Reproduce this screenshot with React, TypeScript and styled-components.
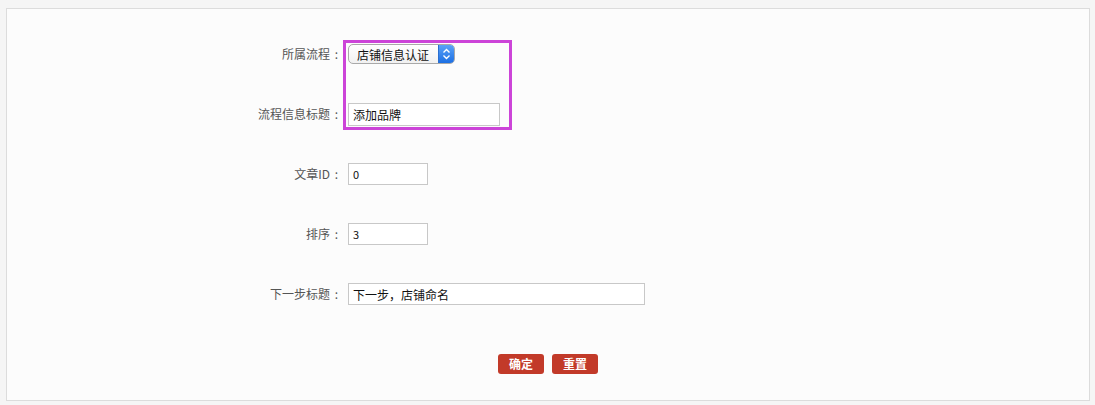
import React from "react";
import styled, { createGlobalStyle } from "styled-components";

const GlobalStyle = createGlobalStyle`
  html, body {
    margin: 0;
    padding: 0;
    background: #f5f5f5;
    font-family: "Noto Sans CJK SC", "Liberation Sans", sans-serif;
  }
`;

const Page = styled.div`
  padding: 8px 5px 4px 6px;
`;

const Panel = styled.div`
  position: relative;
  height: 376px;
  border: 1px solid #dcdcdc;
  background: #fcfcfc;
  padding-top: 15px;
  box-sizing: content-box;
`;

const FormGrid = styled.div`
  display: grid;
  grid-template-columns: 335px 1fr;
  grid-auto-rows: 60px;
  column-gap: 6px;
  align-items: center;
`;

const Label = styled.label`
  text-align: right;
  font-size: 12px;
  color: #555;
  line-height: 16px;
`;

const Colon = styled.span`
  display: inline-block;
  width: 11px;
  margin-left: 1px;
  text-align: center;
`;

const Field = styled.div`
  display: flex;
  align-items: center;
`;

const TextInput = styled.input<{ $width: number; $height?: number; $small?: boolean }>`
  width: ${(p) => p.$width}px;
  height: ${(p) => p.$height ?? 22}px;
  box-sizing: border-box;
  border: 1px solid #c8c8c8;
  background: #fff;
  padding: 0 4px;
  font-family: inherit;
  font-size: ${(p) => (p.$small ? "11px" : "12px")};
  color: #111;
  outline: none;
`;

const SelectBox = styled.div`
  display: flex;
  align-items: stretch;
  width: 107px;
  height: 20px;
  box-sizing: border-box;
  border: 1px solid #a9a9a9;
  border-radius: 5px;
  background: linear-gradient(#ffffff, #f1f1f1);
  overflow: hidden;
`;

const NativeSelect = styled.select`
  flex: 1;
  min-width: 0;
  appearance: none;
  border: none;
  background: transparent;
  padding: 0 0 0 8px;
  font-family: inherit;
  font-size: 12px;
  color: #111;
  outline: none;
`;

const Stepper = styled.span`
  width: 15px;
  display: flex;
  align-items: center;
  justify-content: center;
  background: linear-gradient(#5aa2f7, #1c6fe3);
  border-left: 1px solid #2a6fd0;
`;

const Highlight = styled.div`
  position: absolute;
  left: 336px;
  top: 31px;
  width: 163px;
  height: 84px;
  border: 3px solid #cc44d8;
  pointer-events: none;
`;

const Actions = styled.div`
  display: flex;
  justify-content: center;
  gap: 8px;
  padding-top: 30px;
`;

const Button = styled.button`
  width: 46px;
  height: 20px;
  border: none;
  border-radius: 3px;
  background: #c23a29;
  color: #fff;
  font-family: inherit;
  font-size: 12px;
  font-weight: bold;
  line-height: 20px;
  padding: 0;
  cursor: pointer;
`;

const StepperIcon = () => (
  <svg width="9" height="12" viewBox="0 0 9 12" fill="none">
    <path d="M1.5 4.5 L4.5 1.5 L7.5 4.5" stroke="#fff" strokeWidth="1.4" />
    <path d="M1.5 7.5 L4.5 10.5 L7.5 7.5" stroke="#fff" strokeWidth="1.4" />
  </svg>
);

const FormLabel = ({ text }: { text: string }) => (
  <Label>
    {text}
    <Colon>:</Colon>
  </Label>
);

export default function App() {
  return (
    <Page>
      <GlobalStyle />
      <Panel>
        <FormGrid>
          <FormLabel text="所属流程" />
          <Field>
            <SelectBox>
              <NativeSelect defaultValue="shop">
                <option value="shop">店铺信息认证</option>
              </NativeSelect>
              <Stepper>
                <StepperIcon />
              </Stepper>
            </SelectBox>
          </Field>

          <FormLabel text="流程信息标题" />
          <Field>
            <TextInput $width={152} $height={23} defaultValue="添加品牌" />
          </Field>

          <FormLabel text="文章ID" />
          <Field>
            <TextInput $width={80} $small defaultValue="0" />
          </Field>

          <FormLabel text="排序" />
          <Field>
            <TextInput $width={80} $small defaultValue="3" />
          </Field>

          <FormLabel text="下一步标题" />
          <Field>
            <TextInput $width={297} defaultValue="下一步，店铺命名" />
          </Field>
        </FormGrid>
        <Actions>
          <Button>确定</Button>
          <Button>重置</Button>
        </Actions>
        <Highlight />
      </Panel>
    </Page>
  );
}
